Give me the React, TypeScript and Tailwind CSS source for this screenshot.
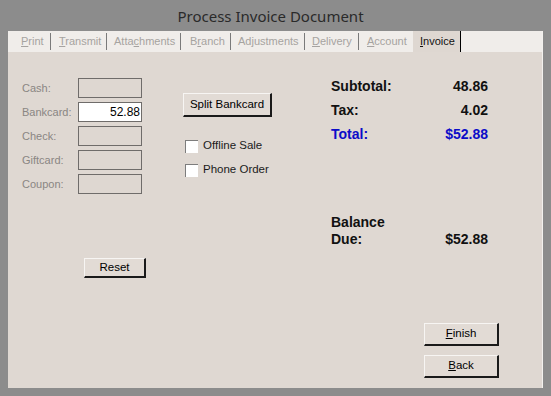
import React from "react";

const font = "font-['Liberation_Sans',Arial,sans-serif]";

function Sep() {
  return <span className="h-[17px] w-px bg-[#7a7a7a]" />;
}

function Field({ label, value, active }: { label: string; value?: string; active?: boolean }) {
  return (
    <div className="flex h-[20px] items-center">
      <span className="w-[56px] text-[11px] text-[#8a8683]">{label}</span>
      <div
        className={`flex h-[20px] w-[64px] items-center justify-end border border-[#6f6c6a] pr-[1px] text-[12px] text-black ${
          active ? "bg-white" : "bg-[#ded7d1]"
        }`}
      >
        {value}
      </div>
    </div>
  );
}

function Button({ children, className }: { children: React.ReactNode; className: string }) {
  return (
    <button
      className={`flex items-center justify-center border-r-2 border-b-2 border-t border-l border-t-[#f7f5f3] border-l-[#f7f5f3] border-r-[#1a1a1a] border-b-[#1a1a1a] bg-[#e2dbd5] text-[11.5px] text-black ${className}`}
    >
      {children}
    </button>
  );
}

function Check({ label }: { label: string }) {
  return (
    <div className="flex h-[24px] items-center">
      <span className="h-[13px] w-[13px] border-t border-l border-t-[#7d7d7d] border-l-[#7d7d7d] bg-white" />
      <span className="ml-[5px] text-[11.5px] text-[#1b1b1b]">{label}</span>
    </div>
  );
}

export default function App() {
  return (
    <div className={`flex h-[396px] w-[551px] flex-col bg-[#8c8c8c] ${font}`}>
      <div className="flex h-[31px] items-center justify-center pt-[1px] pr-[10px] font-['Noto_Sans',sans-serif] text-[15px] text-[#2a2a2a]">
        Process Invoice Document
      </div>
      <div className="mx-[8px] mb-[8px] flex flex-1 flex-col border-r border-r-[#f3f1ee] bg-[#dfd8d2]">
        <div className="flex h-[21px] items-center bg-[#f0edea] pl-[13px] text-[11px] text-[#a6a3a0]">
          <span className="w-[29px]"><u>P</u>rint</span>
          <Sep />
          <span className="ml-[8px] w-[47px]"><u>T</u>ransmit</span>
          <Sep />
          <span className="ml-[7px] w-[66px]">Atta<u>c</u>hments</span>
          <Sep />
          <span className="ml-[9px] w-[40px]">B<u>r</u>anch</span>
          <Sep />
          <span className="ml-[7px] w-[66px]">Ad<u>j</u>ustments</span>
          <Sep />
          <span className="ml-[7px] w-[46px]"><u>D</u>elivery</span>
          <Sep />
          <span className="ml-[8px] w-[46px]"><u>A</u>ccount</span>
          <span className="flex h-[21px] w-[48px] items-center border-r border-r-black bg-[#ded7d1] pl-[7px] text-[#111]">
            <u>I</u>nvoice
          </span>
        </div>
        <div className="flex flex-1">
          <div className="flex w-[175px] flex-col gap-[4px] pl-[14px] pt-[26px]">
            <Field label="Cash:" />
            <Field label="Bankcard:" value="52.88" active />
            <Field label="Check:" />
            <Field label="Giftcard:" />
            <Field label="Coupon:" />
            <Button className="mt-[60px] ml-[62px] h-[20px] w-[62px]">Reset</Button>
          </div>
          <div className="flex w-[148px] flex-col pt-[41px]">
            <Button className="h-[24px] w-[89px]">Split Bankcard</Button>
            <div className="mt-[17px] ml-[2px] flex flex-col">
              <Check label="Offline Sale" />
              <Check label="Phone Order" />
            </div>
          </div>
          <div className="flex flex-col pt-[22px] text-[14px] font-bold text-[#111]">
            <div className="flex h-[24px] w-[157px] items-center justify-between">
              <span>Subtotal:</span>
              <span>48.86</span>
            </div>
            <div className="flex h-[24px] w-[157px] items-center justify-between">
              <span>Tax:</span>
              <span>4.02</span>
            </div>
            <div className="flex h-[24px] w-[157px] items-center justify-between text-[#0c0cc8]">
              <span>Total:</span>
              <span>$52.88</span>
            </div>
            <div className="mt-[68px] flex w-[157px] items-end justify-between leading-[17px]">
              <span>
                Balance
                <br />
                Due:
              </span>
              <span>$52.88</span>
            </div>
            <Button className="mt-[75px] ml-[93px] h-[23px] w-[75px] font-normal">
              <u>F</u>inish
            </Button>
            <Button className="mt-[9px] ml-[93px] h-[23px] w-[75px] font-normal">
              <u>B</u>ack
            </Button>
          </div>
        </div>
      </div>
    </div>
  );
}
